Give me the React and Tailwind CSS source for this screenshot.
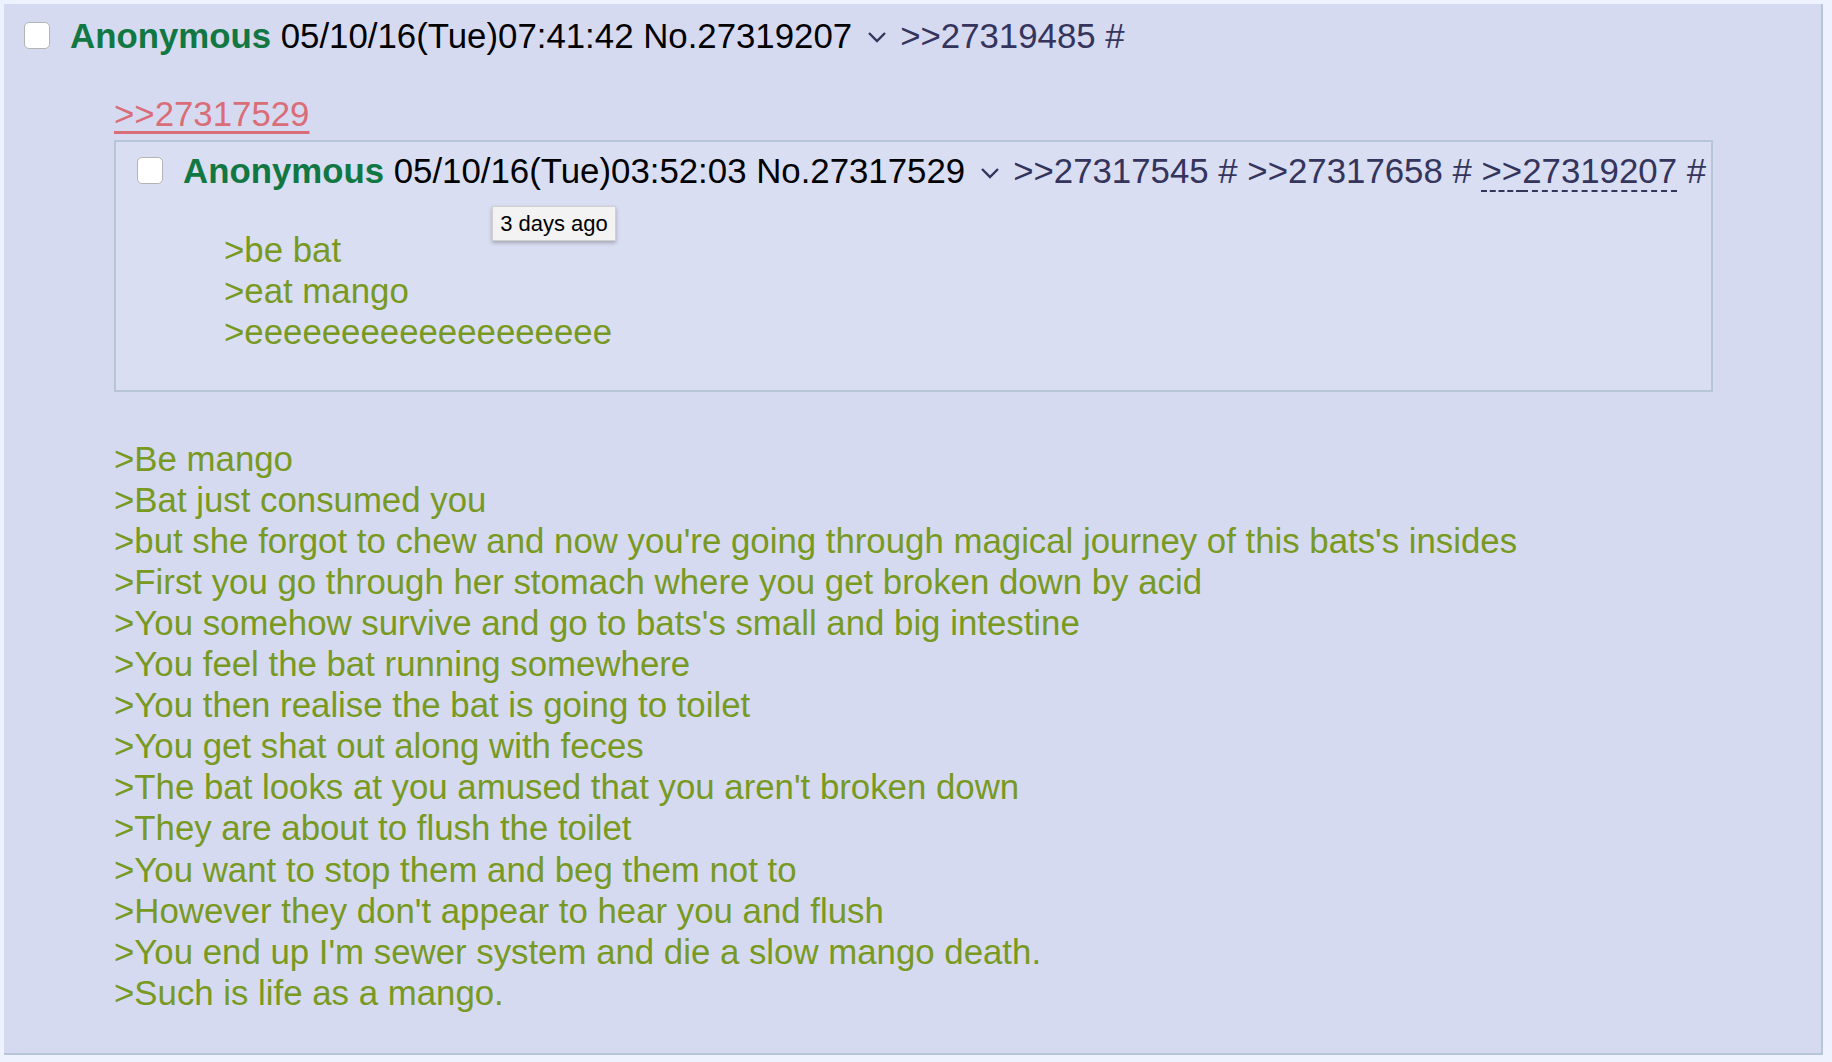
const outerLines = [
  ">Be mango",
  ">Bat just consumed you",
  ">but she forgot to chew and now you're going through magical journey of this bats's insides",
  ">First you go through her stomach where you get broken down by acid",
  ">You somehow survive and go to bats's small and big intestine",
  ">You feel the bat running somewhere",
  ">You then realise the bat is going to toilet",
  ">You get shat out along with feces",
  ">The bat looks at you amused that you aren't broken down",
  ">They are about to flush the toilet",
  ">You want to stop them and beg them not to",
  ">However they don't appear to hear you and flush",
  ">You end up I'm sewer system and die a slow mango death.",
  ">Such is life as a mango.",
];

const innerLines = [">be bat", ">eat mango", ">eeeeeeeeeeeeeeeeeee"];

function Chevron() {
  return (
    <svg
      width="20"
      height="14"
      viewBox="0 0 20 14"
      className="inline-block align-middle ml-[15px] mr-[13px] -mt-[3px]"
    >
      <polyline
        points="2,3 10,11 18,3"
        fill="none"
        stroke="#34345c"
        strokeWidth="2.4"
      />
    </svg>
  );
}

function Check() {
  return (
    <input
      type="checkbox"
      className="appearance-none shrink-0 w-[26px] h-[27px] bg-white border border-[#b4b4b4] rounded-[5px]"
    />
  );
}

function Header({ time, no, links, last }) {
  return (
    <div className="flex items-center whitespace-nowrap">
      <Check />
      <div className="ml-[20px]">
        <span className="font-bold text-[#117743]">Anonymous</span>{" "}
        <span className="text-black">
          {time} No.{no}
        </span>
        <Chevron />
        {links.map((l, i) => (
          <span key={l} className="text-[#34345c]">
            {i > 0 && " "}
            {l === last ? (
              <span className="underline decoration-dashed decoration-2 underline-offset-[7px]">
                &gt;&gt;{l}
              </span>
            ) : (
              <span>&gt;&gt;{l}</span>
            )}{" "}
            #
          </span>
        ))}
      </div>
    </div>
  );
}

export default function App() {
  return (
    <div className="min-h-screen bg-[#eef2ff] pt-[4px] pl-[4px] pr-[9px] font-['Liberation_Sans',Arial,sans-serif] text-[34.8px] leading-[41.1px]">
      <div className="bg-[#d6daf0] border-r-2 border-b-2 border-[#b7c5d9] pt-[11px] pb-[40px]">
        <div className="pl-[20px]">
          <Header
            time="05/10/16(Tue)07:41:42"
            no="27319207"
            links={["27319485"]}
          />
        </div>

        <div className="ml-[110px] mt-[37px]">
          <div className="text-[#d96d78] underline decoration-[3px] underline-offset-[5px]">
            &gt;&gt;27317529
          </div>

          <div className="relative mt-[6px] w-[1599px] bg-[#dadef2] border-2 border-[#b7c5d9] pt-[8px] pb-[37px] pl-[21px]">
            <Header
              time="05/10/16(Tue)03:52:03"
              no="27317529"
              links={["27317545", "27317658", "27319207"]}
              last="27319207"
            />
            <div className="absolute left-[376px] top-[64px] w-[124px] h-[35px] flex items-center justify-center bg-[#f3f3f3] border border-[#d0d0d0] shadow-[0_2px_4px_rgba(0,0,0,0.25)] text-[22px] leading-none text-black">
              3 days ago
            </div>
            <div className="mt-[38px] ml-[87px] text-[#789922]">
              {innerLines.map((l) => (
                <div key={l}>{l}</div>
              ))}
            </div>
          </div>

          <div className="mt-[46px] text-[#789922]">
            {outerLines.map((l) => (
              <div key={l}>{l}</div>
            ))}
          </div>
        </div>
      </div>
    </div>
  );
}
